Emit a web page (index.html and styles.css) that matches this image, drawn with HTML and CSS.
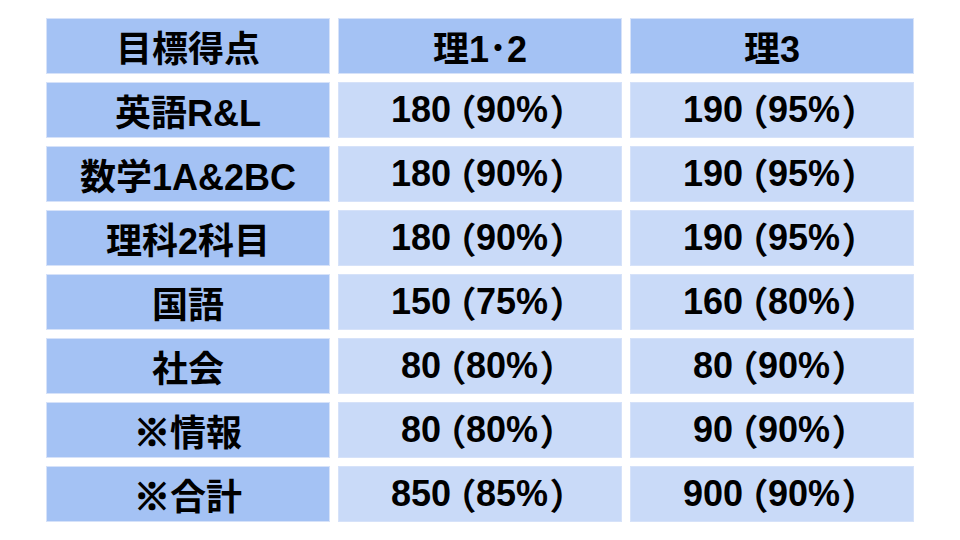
FILE: index.html
```html
<!DOCTYPE html>
<html lang="ja">
<head>
<meta charset="utf-8">
<link rel="stylesheet" href="styles.css">
</head>
<body>
<div class="table">
  <div class="cell head">目標得点</div>
  <div class="cell head">理1･2</div>
  <div class="cell head">理3</div>

  <div class="cell head">英語R&amp;L</div>
  <div class="cell">180<span class="op">（</span>90%<span class="cp">）</span></div>
  <div class="cell">190<span class="op">（</span>95%<span class="cp">）</span></div>

  <div class="cell head">数学1A&amp;2BC</div>
  <div class="cell">180<span class="op">（</span>90%<span class="cp">）</span></div>
  <div class="cell">190<span class="op">（</span>95%<span class="cp">）</span></div>

  <div class="cell head">理科2科目</div>
  <div class="cell">180<span class="op">（</span>90%<span class="cp">）</span></div>
  <div class="cell">190<span class="op">（</span>95%<span class="cp">）</span></div>

  <div class="cell head">国語</div>
  <div class="cell">150<span class="op">（</span>75%<span class="cp">）</span></div>
  <div class="cell">160<span class="op">（</span>80%<span class="cp">）</span></div>

  <div class="cell head">社会</div>
  <div class="cell">80<span class="op">（</span>80%<span class="cp">）</span></div>
  <div class="cell">80<span class="op">（</span>90%<span class="cp">）</span></div>

  <div class="cell head"><span class="mark">※</span>情報</div>
  <div class="cell">80<span class="op">（</span>80%<span class="cp">）</span></div>
  <div class="cell">90<span class="op">（</span>90%<span class="cp">）</span></div>

  <div class="cell head"><span class="mark">※</span>合計</div>
  <div class="cell">850<span class="op">（</span>85%<span class="cp">）</span></div>
  <div class="cell">900<span class="op">（</span>90%<span class="cp">）</span></div>
</div>
</body>
</html>
```
FILE: styles.css
```css
html, body {
  margin: 0;
  padding: 0;
  background: #ffffff;
}
body {
  width: 960px;
  height: 540px;
  overflow: hidden;
}
.table {
  display: grid;
  grid-template-columns: 284px 284px 284px;
  grid-auto-rows: 56px;
  gap: 8px;
  padding: 18px 0 0 46px;
}
.cell {
  display: flex;
  align-items: center;
  justify-content: center;
  box-sizing: border-box;
  border: 1px solid #d6e2f9;
  background: #c9daf8;
  color: #000000;
  font-family: "Liberation Sans", "Noto Sans CJK JP", sans-serif;
  font-weight: bold;
  font-size: 36px;
  white-space: nowrap;
}
.cell.head {
  background: #a4c2f4;
}
.op, .cp {
  font-family: "Noto Sans CJK JP", sans-serif;
  font-feature-settings: "palt";
}
.op {
  margin: 0 1px 0 6px;
}
.cp {
  margin: 0 0 0 3px;
}
.mark {
  font-family: "Noto Sans CJK JP", sans-serif;
  font-weight: bold;
  -webkit-text-stroke: 1.6px #000;
}
```
